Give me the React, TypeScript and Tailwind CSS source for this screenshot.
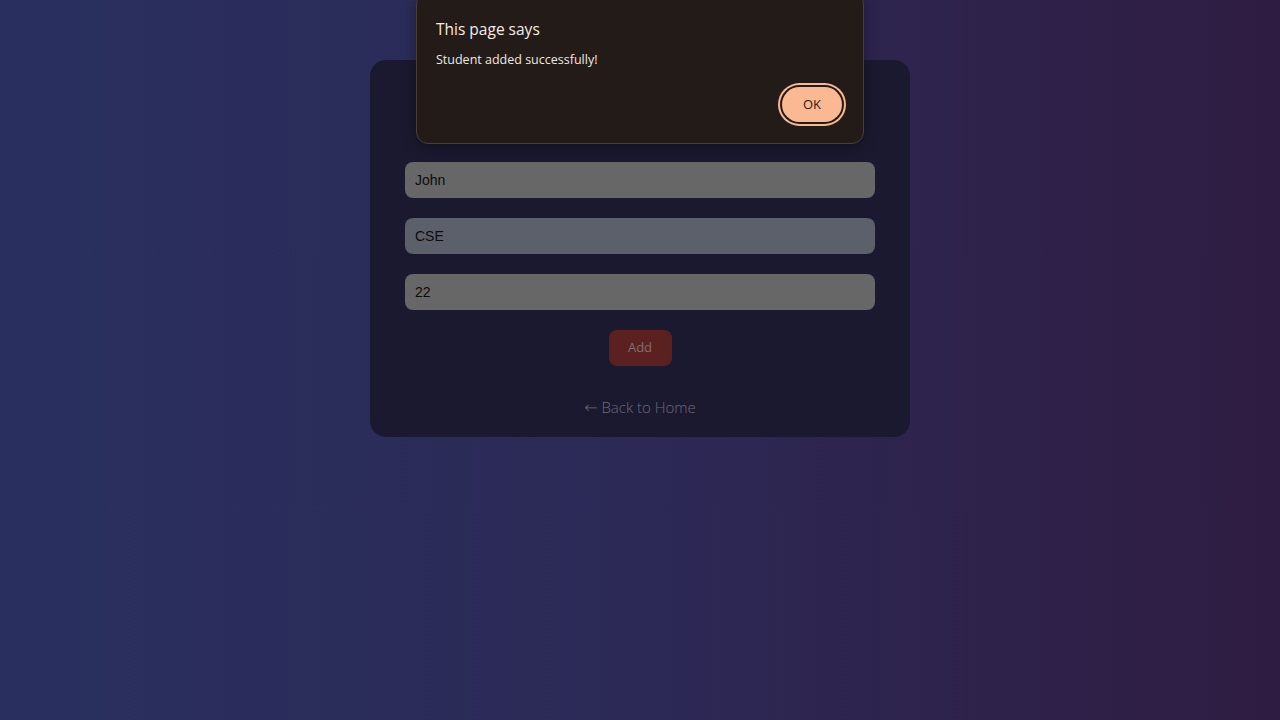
import React from 'react';

const App: React.FC = () => {
  return (
    <div className="relative min-h-[720px] w-full bg-linear-to-r from-[#29305f] via-[#2c2956] to-[#2f1c42] pt-[60px]">
      {/* form card */}
      <div className="mx-auto w-[540px] rounded-2xl bg-[#1b1930] px-[35px] pt-[35px] pb-5">
        <h2 className="mb-5 h-[47px] text-center text-[26px] font-semibold text-[#4a4660] [font-family:'Open_Sans',sans-serif]">
          Add Student
        </h2>

        <div className="flex flex-col gap-5 [font-family:'Liberation_Sans',Arial,sans-serif]">
          <input
            readOnly
            value="John"
            className="h-9 w-full rounded-lg bg-[#676767] px-[10px] text-[14px] text-[#0c0c0c] outline-none"
          />
          <input
            readOnly
            value="CSE"
            className="h-9 w-full rounded-lg bg-[#5c606a] px-[10px] text-[14px] text-[#0c0c0c] outline-none"
          />
          <input
            readOnly
            value="22"
            className="h-9 w-full rounded-lg bg-[#676767] px-[10px] text-[14px] text-[#0c0c0c] outline-none"
          />
        </div>

        <div className="mt-5 flex justify-center">
          <button className="h-9 w-[63px] rounded-lg bg-[#5b2120] text-[13px] text-[#7d7173] [font-family:'Open_Sans',sans-serif]">
            Add
          </button>
        </div>

        <div className="mt-[31px] h-5 text-center text-[15px] leading-5 font-light text-[#706878] [font-family:'Open_Sans',sans-serif]">
          <span className="text-[16px] leading-none font-extralight [font-family:'DejaVu_Sans',sans-serif]">←</span> Back to Home
        </div>
      </div>

      {/* alert dialog */}
      <div className="absolute -top-2 left-[416px] w-[448px] rounded-xl border border-[#4a3f38] bg-[#221b17] pt-[26px] pr-[21px] pb-[21px] pl-[19px] shadow-[0_4px_14px_rgba(0,0,0,0.35)] [font-family:'Open_Sans',sans-serif]">
        <div className="text-[15.5px] leading-5 font-medium text-[#f5ece6]">This page says</div>
        <div className="mt-3 text-[12.5px] leading-[18px] text-[#f0e8e2]">Student added successfully!</div>
        <div className="mt-[18px] flex justify-end">
          <button className="h-[35px] w-[60px] rounded-full bg-[#fbb993] text-[13px] text-[#2a1a12] shadow-[0_0_0_2px_#221b17,0_0_0_4px_#fbb993]">
            OK
          </button>
        </div>
      </div>
    </div>
  );
};

export default App;
